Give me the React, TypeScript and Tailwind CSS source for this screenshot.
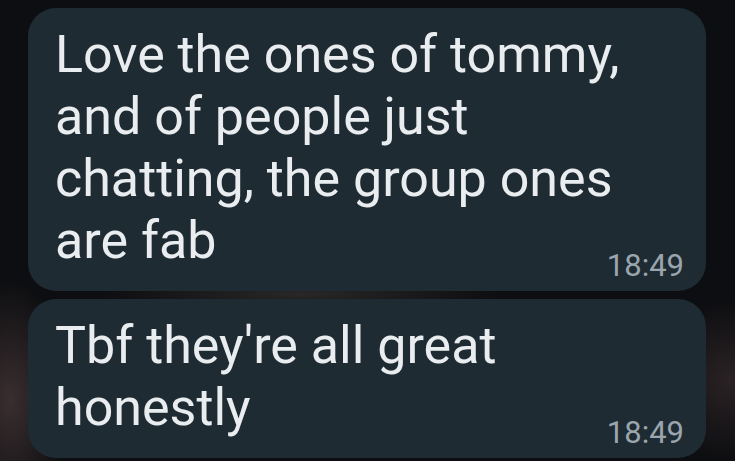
import React from "react";

function Bubble({ lines, time }: { lines: string[]; time: string }) {
  return (
    <div className="w-[678px] rounded-[28px] bg-[#1f2b33] pl-[27px] pr-[22px] pt-[16px] pb-[7px]">
      <div className="text-[52px] leading-[62px] text-[#e9edef]">
        {lines.map((l, i) => (
          <div key={i} className="whitespace-nowrap">{l}</div>
        ))}
      </div>
      <div className="-mt-[24px] flex justify-end text-[31px] leading-[36px] text-[#9aa5ad]">
        {time}
      </div>
    </div>
  );
}

export default function App() {
  return (
    <div
      className="w-[735px] h-[461px] overflow-hidden bg-[#0d0e11] bg-[radial-gradient(ellipse_60px_120px_at_10px_400px,#3a2e2f_0%,transparent_100%),radial-gradient(ellipse_80px_80px_at_730px_380px,#2a2224_0%,transparent_100%),radial-gradient(ellipse_200px_20px_at_300px_294px,#2a2828_0%,transparent_100%)] pt-[8px] pl-[28px] flex flex-col gap-[8px]"
      style={{ fontFamily: "Roboto, 'Noto Sans', sans-serif" }}
    >
      <Bubble
        lines={["Love the ones of tommy,", "and of people just", "chatting, the group ones", "are fab"]}
        time="18:49"
      />
      <Bubble lines={["Tbf they're all great", "honestly"]} time="18:49" />
    </div>
  );
}
